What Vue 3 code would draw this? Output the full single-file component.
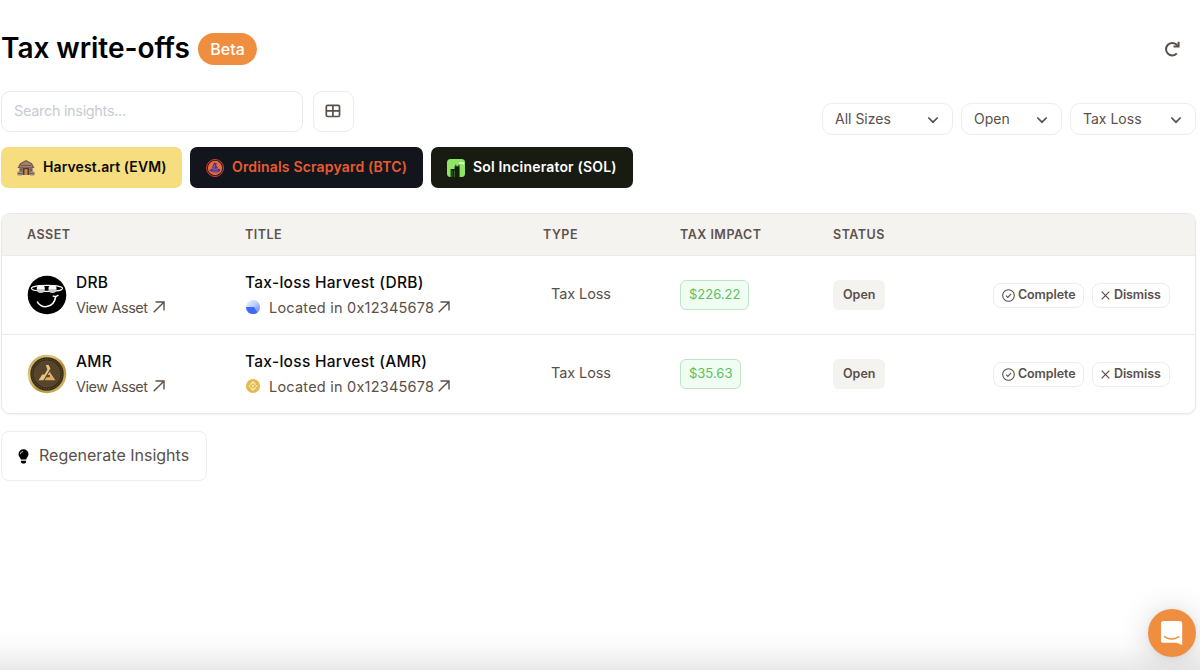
<script setup>
    import { ref } from 'vue'

    const search = ref('')

    const filters = [
        { label: 'All Sizes', name: 'sizes' },
        { label: 'Open', name: 'status' },
        { label: 'Tax Loss', name: 'type' },
    ]

    const columns = ['Asset', 'Title', 'Type', 'Tax Impact', 'Status', '']

    const insights = [
        { symbol: 'DRB', chain: 'base', wallet: '0x12345678', type: 'Tax Loss', impact: '$226.22', status: 'Open' },
        { symbol: 'AMR', chain: 'bnb', wallet: '0x12345678', type: 'Tax Loss', impact: '$35.63', status: 'Open' },
    ]
</script>

<template>
    <div class="page">
        <header class="page-header">
            <h1>Tax write-offs</h1>
            <span class="beta">Beta</span>
            <button class="refresh" aria-label="Refresh">
                <svg width="18" height="18" viewBox="0 0 18 18" fill="none" stroke="currentColor" stroke-width="2">
                    <path d="M13.8 13.4A6.2 6.2 0 1 1 13.4 4.6L15 6.2" />
                    <path d="M15.6 1.7V6.6H10.5" />
                </svg>
            </button>
        </header>

        <div class="toolbar">
            <input v-model="search" class="search" type="text" placeholder="Search insights...">
            <button class="view-toggle" aria-label="Table view">
                <svg width="16" height="14" viewBox="0 0 16 14" fill="none" stroke="currentColor" stroke-width="1.7">
                    <rect x="1.3" y="1.3" width="13.2" height="11.2" rx="1.4" />
                    <path d="M7.9 1.3V12.5M1.3 6.9H14.5" />
                </svg>
            </button>
            <div class="filters">
                <button v-for="filter in filters" :key="filter.name" class="filter" :class="filter.name">
                    <span>{{ filter.label }}</span>
                    <svg width="12" height="8" viewBox="0 0 12 8" fill="none" stroke="currentColor" stroke-width="1.7">
                        <path d="M1.3 1.5L6 6.2L10.7 1.5" />
                    </svg>
                </button>
            </div>
        </div>

        <div class="partners">
            <a class="partner harvest">
                <svg width="18" height="18" viewBox="0 0 18 18">
                    <path d="M2.3 8H15.7V16H2.3Z" fill="#8c7468" />
                    <path d="M9 1L15 4.2L17.5 9H.5L3 4.2Z" fill="#78594d" />
                    <path d="M9 2.2L13.8 5L15.6 8.2H2.4L4.2 5Z" fill="#a2806e" />
                    <path d="M6 9H12V16H6Z" fill="#57372e" />
                    <path d="M7.5 10.2H10.5V16H7.5Z" fill="#c68a4e" />
                    <path d="M4 9.5V16M14 9.5V16" stroke="#59463f" />
                    <path d="M.5 12.5H5V16.5H.5ZM13 12.5H17.5V16.5H13Z" fill="#a08a82" />
                    <path d="M.5 14.5H5M13 14.5H17.5M4 6.5H14" stroke="#67504a" stroke-width=".8" />
                </svg>
                <span>Harvest.art (EVM)</span>
            </a>
            <a class="partner ordinals">
                <svg width="18" height="18" viewBox="0 0 18 18">
                    <circle cx="9" cy="9" r="8.5" fill="#15161f" stroke="#c9472d" />
                    <circle cx="9" cy="9" r="7.2" fill="#f0673a" />
                    <path d="M8 3.2L11.2 4.8L10 5.8L12.3 9.8L14.6 10.4Q13.4 13.6 9 13.6Q4.6 13.4 3.4 11L5.8 9.8Z" fill="#4b3580" />
                    <path d="M8.2 4.8L9.4 8L7.2 9.2ZM5 11.2Q9 12.8 13 11Q11.6 12.9 9 12.9Q6.4 12.8 5 11.2Z" fill="#7e62b0" />
                    <path d="M6 9.8Q9 11 12.2 9.7" fill="none" stroke="#b78bc2" stroke-width=".7" />
                </svg>
                <span>Ordinals Scrapyard (BTC)</span>
            </a>
            <a class="partner incinerator">
                <svg width="18" height="18" viewBox="0 0 18 18">
                    <rect width="18" height="18" rx="3.5" fill="#8fe467" />
                    <path d="M3.6 18V10H7.6V7.3H12.6V18Z" fill="#12200e" />
                    <path d="M5 11.5V18M7.4 11.5V18" stroke="#5f9a45" stroke-width=".6" />
                    <path d="M8.8 5.7V7.3M11.9 5.7V7.3" stroke="#12200e" />
                    <path d="M11.8 4Q13.5 2.4 15.2 3.4L17 3.2V6Q15.8 4.8 14.6 5.2Q13.6 4.2 11.8 5Z" fill="#e4ffd8" />
                </svg>
                <span>Sol Incinerator (SOL)</span>
            </a>
        </div>

        <section class="table">
            <div class="row head">
                <span v-for="column in columns" :key="column">{{ column }}</span>
            </div>
            <div v-for="item in insights" :key="item.symbol" class="row">
                <div class="asset">
                    <svg v-if="item.symbol === 'DRB'" class="avatar" viewBox="0 0 40 40">
                        <circle cx="20" cy="20" r="19.3" fill="#000" />
                        <g fill="none" stroke="#fff">
                            <ellipse cx="20" cy="13.4" rx="15.5" ry="3" stroke-width="1.2" />
                            <path d="M10.2 26.4C13 33.8 26.5 34.5 28.8 21.5" stroke-width="1.5" />
                            <path d="M25.7 20.8Q28.8 22.4 31.4 20" stroke-width="1.5" />
                        </g>
                        <path d="M9.7 14A4.1 4.1 0 0 1 17.9 14ZM21.4 14A4.1 4.1 0 0 1 29.6 14Z" fill="#fff" />
                        <path d="M9.7 14A4.1 4.1 0 0 0 17.9 14ZM21.4 14A4.1 4.1 0 0 0 29.6 14Z" fill="#ccc" />
                    </svg>
                    <svg v-else class="avatar" viewBox="0 0 40 40">
                        <defs>
                            <linearGradient id="gold" x1="0" y1="0" x2="1" y2="1">
                                <stop offset="0" stop-color="#aa8a3e" />
                                <stop offset=".3" stop-color="#e1ca7e" />
                                <stop offset=".6" stop-color="#b58e38" />
                                <stop offset="1" stop-color="#e3c572" />
                            </linearGradient>
                            <radialGradient id="bronze">
                                <stop offset="0" stop-color="#665331" />
                                <stop offset="1" stop-color="#342a1a" />
                            </radialGradient>
                        </defs>
                        <circle cx="20" cy="20" r="19.3" fill="url(#gold)" />
                        <circle cx="20" cy="20" r="16.7" fill="url(#bronze)" />
                        <circle cx="20" cy="20" r="15" fill="none" stroke="#6f5c37" stroke-dasharray="1.2 1.4" />
                        <circle cx="20" cy="20" r="12.9" fill="#56452a" stroke="#685231" stroke-width=".6" />
                        <path d="M18.8 11H21.6L23.4 14.4L16.4 26.2H11.6L15.2 20.6H17.6L20.4 15.4Z" fill="#e8c184" />
                        <path d="M22.6 17.6L28.4 26.2H17.6L19.4 23.2H22.8V21H20.6Z" fill="#dcab66" />
                    </svg>
                    <div class="stack">
                        <strong>{{ item.symbol }}</strong>
                        <a class="link">
                            <span class="view">View Asset</span>
                            <svg class="arrow" viewBox="0 0 12 12"><path d="M.7 11.3L10.8 1.2M2.5 1H11V9.5" /></svg>
                        </a>
                    </div>
                </div>
                <div class="stack title">
                    <strong>Tax-loss Harvest ({{ item.symbol }})</strong>
                    <a class="link">
                        <svg v-if="item.chain === 'base'" class="chain" viewBox="0 0 14 14">
                            <defs>
                                <linearGradient id="sky" x1="0" y1="0" x2="1" y2="1">
                                    <stop offset="0" stop-color="#f4f7ff" />
                                    <stop offset=".5" stop-color="#b9ccfe" />
                                    <stop offset="1" stop-color="#5078fc" />
                                </linearGradient>
                            </defs>
                            <circle cx="7" cy="7" r="7" fill="url(#sky)" />
                            <path d="M0 7H8L11.5 12.4A7 7 0 0 1 0 7Z" fill="#3f6af8" />
                        </svg>
                        <svg v-else class="chain" viewBox="0 0 14 14">
                            <circle cx="7" cy="7" r="7" fill="#e5b94c" />
                            <g fill="none" stroke="#fff6dc" stroke-width="1.1">
                                <path d="M4.4 5.7L7 3.1L9.6 5.7M4.4 8.3L7 10.9L9.6 8.3" />
                            </g>
                            <path d="M7 5.7L8.3 7L7 8.3L5.7 7ZM3.4 6.1L4.3 7L3.4 7.9L2.5 7ZM10.6 6.1L11.5 7L10.6 7.9L9.7 7Z" fill="#fff6dc" />
                        </svg>
                        <span class="located">Located in {{ item.wallet }}</span>
                        <svg class="arrow" viewBox="0 0 12 12"><path d="M.7 11.3L10.8 1.2M2.5 1H11V9.5" /></svg>
                    </a>
                </div>
                <div class="type-cell">{{ item.type }}</div>
                <div><span class="impact">{{ item.impact }}</span></div>
                <div><span class="status-badge">{{ item.status }}</span></div>
                <div class="actions">
                    <button class="action complete">
                        <svg width="13" height="13" viewBox="0 0 13 13" fill="none" stroke="currentColor" stroke-width="1.1">
                            <circle cx="6.5" cy="6.5" r="5.8" />
                            <path d="M4 6.7L5.8 8.4L9.1 4.8" />
                        </svg>
                        <span>Complete</span>
                    </button>
                    <button class="action dismiss">
                        <svg width="9" height="9" viewBox="0 0 9 9" fill="none" stroke="currentColor" stroke-width="1.2">
                            <path d="M.7.7L8.3 8.3M8.3.7L.7 8.3" />
                        </svg>
                        <span>Dismiss</span>
                    </button>
                </div>
            </div>
        </section>

        <button class="regenerate">
            <svg width="11" height="15" viewBox="0 0 11 15">
                <path d="M5.5.3A5 5 0 0 0 .5 5.3C.5 7.8 2.6 8.4 2.8 10.6H8.2C8.4 8.4 10.5 7.8 10.5 5.3A5 5 0 0 0 5.5.3ZM3 11.8H8V13.5L6.8 14.6H4.2L3 13.5Z" />
                <path d="M2.3 5.2A3 3 0 0 1 5 2.5" fill="none" stroke="#fff" stroke-width=".8" />
            </svg>
            <span>Regenerate Insights</span>
        </button>

        <div class="shade" />
        <button class="chat" aria-label="Open chat">
            <svg width="24" height="26" viewBox="0 0 24 26">
                <path d="M3.6 1H19.6A2.6 2.6 0 0 1 22.2 3.6V25L16.5 22.8H3.6A2.6 2.6 0 0 1 1 20.2V3.6A2.6 2.6 0 0 1 3.6 1Z" fill="#fff" />
                <path d="M4.5 16.6Q11.6 21.4 18.7 16.6" fill="none" stroke="#ef8e3f" stroke-width="1.3" stroke-linecap="round" />
            </svg>
        </button>
    </div>
</template>

<style>
    body {
        background: #fff;
        overflow: hidden;
    }
</style>

<style scoped>
    .page {
        box-sizing: border-box;
        height: 670px;
        padding: 32px 4px 0 1px;
        font-family: Inter, "Liberation Sans", sans-serif;
        color: #5a504a;
        position: relative;
    }

    .page *,
    .page *::before {
        box-sizing: border-box;
    }

    button {
        font: inherit;
        color: inherit;
        background: #fff;
        border: 1px solid #ececec;
        padding: 0;
        display: flex;
        align-items: center;
    }

    svg {
        display: block;
        flex: none;
    }

    span,
    strong {
        white-space: nowrap;
    }

    .page-header {
        height: 33px;
        display: flex;
        align-items: center;
    }

    h1 {
        margin: 0;
        width: 197px;
        font-size: 28px;
        line-height: 33px;
        font-weight: 600;
        letter-spacing: -0.05px;
        color: #000;
        white-space: nowrap;
    }

    .beta {
        width: 59px;
        height: 32px;
        margin-top: 1px;
        padding-bottom: 1px;
        border-radius: 16px;
        background: #ef8e3f;
        color: #fff;
        font-size: 16px;
        font-weight: 500;
        display: flex;
        align-items: center;
        justify-content: center;
    }

    .refresh {
        border: 0;
        margin-left: auto;
        margin-right: 15px;
    }

    .toolbar {
        margin-top: 26px;
        height: 41px;
        display: flex;
        gap: 10px;
    }

    .search {
        width: 302px;
        height: 41px;
        border: 1px solid #e9e9ec;
        border-radius: 9px;
        padding: 0 12px 2px;
        font: 400 14.5px Inter, "Liberation Sans", sans-serif;
        letter-spacing: -0.33px;
    }

    .search::placeholder {
        color: #c8cbd2;
        opacity: 1;
    }

    .view-toggle {
        width: 41px;
        height: 41px;
        border-radius: 9px;
        padding: 0 1px 1px 0;
        justify-content: center;
    }

    .filters {
        margin: 12px 0 0 auto;
        display: flex;
        gap: 8px;
    }

    .filter {
        height: 32px;
        border-radius: 10px;
        padding: 0 13px 2px 12px;
        justify-content: space-between;
        font-size: 14px;
    }

    .filter svg {
        margin-top: 3px;
    }

    .sizes {
        width: 131px;
    }

    .status {
        width: 101px;
    }

    .type {
        width: 126px;
    }

    .partners {
        margin-top: 15px;
        display: flex;
        gap: 8px;
    }

    .partner {
        height: 41px;
        border-radius: 7px;
        padding: 0 16px;
        display: flex;
        align-items: center;
        gap: 8px;
        font-size: 14px;
        font-weight: 600;
        letter-spacing: 0.17px;
    }

    .partner span {
        margin-bottom: 2px;
    }

    .harvest {
        width: 181px;
        background: #f6de80;
        color: #0c0b06;
        letter-spacing: 0.08px;
    }

    .ordinals {
        width: 233px;
        background: #13151d;
        color: #e85c30;
    }

    .incinerator {
        width: 202px;
        background: #171b11;
        color: #fff;
    }

    .table {
        margin-top: 25px;
        height: 201px;
        border: 1px solid #e8e8e8;
        border-radius: 9px;
        overflow: hidden;
        box-shadow: 0 1px 2px rgba(0, 0, 0, 0.06);
    }

    .row {
        height: 79px;
        padding: 0 25px;
        display: grid;
        grid-template-columns: 218px 298px 137px 153px 1fr 177px;
        align-items: center;
    }

    .row + .row {
        border-top: 1px solid #ececec;
    }

    .head {
        height: 41px;
        background: #f4f3f0;
        font-size: 12.5px;
        font-weight: 600;
        letter-spacing: 0.5px;
        text-transform: uppercase;
        color: #5c524d;
    }

    .asset {
        display: flex;
        align-items: center;
        gap: 9px;
    }

    .avatar {
        width: 40px;
        height: 40px;
    }

    .stack {
        display: flex;
        flex-direction: column;
        gap: 5px;
        padding-bottom: 1px;
    }

    .stack strong {
        font-size: 15.5px;
        font-weight: 500;
        line-height: 20px;
        letter-spacing: 0.29px;
        color: #0b0a0a;
    }

    .link {
        height: 19px;
        display: flex;
        align-items: center;
        font-size: 14.5px;
    }

    .view {
        letter-spacing: -0.45px;
    }

    .located {
        letter-spacing: 0.22px;
    }

    .arrow {
        width: 12px;
        height: 12px;
        margin-left: 4px;
        fill: none;
        stroke: currentColor;
        stroke-width: 1.4;
    }

    .view + .arrow {
        margin-left: 5px;
    }

    .chain {
        width: 14px;
        height: 14px;
        margin-right: 9px;
        margin-left: 1px;
    }

    .type-cell {
        padding: 0 0 3px 8px;
        font-size: 14.5px;
        letter-spacing: -0.1px;
    }

    .impact,
    .status-badge {
        display: inline-flex;
        align-items: center;
        height: 30px;
        border-radius: 6px;
    }

    .impact {
        padding: 0 8px 2px;
        border: 1px solid #bfe3c8;
        background: #effdf2;
        color: #5dc05e;
        font-size: 13px;
    }

    .status-badge {
        padding: 0 10px 2px;
        background: #f4f3f0;
        font-size: 12.5px;
        font-weight: 600;
    }

    .actions {
        display: flex;
        gap: 8px;
    }

    .action {
        height: 25px;
        border-radius: 8px;
        padding: 0 8px;
        font-size: 12.5px;
        font-weight: 600;
        letter-spacing: -0.1px;
    }

    .action span {
        margin-bottom: 1px;
    }

    .complete {
        width: 91px;
        gap: 3px;
    }

    .dismiss {
        width: 78px;
        gap: 4px;
    }

    .regenerate {
        margin-top: 17px;
        width: 206px;
        height: 50px;
        border-radius: 8px;
        padding: 0 16px;
        gap: 10px;
        font-size: 16px;
    }

    .regenerate span {
        margin-bottom: 2px;
    }

    .shade {
        position: absolute;
        left: 0;
        right: 0;
        bottom: 0;
        height: 40px;
        background: linear-gradient(#fff, #fbfbfb 40%, #e9e9e9);
    }

    .chat {
        position: absolute;
        right: 4px;
        bottom: 13px;
        width: 48px;
        height: 48px;
        border: 0;
        border-radius: 50%;
        background: #ef8e3f;
        justify-content: center;
        box-shadow: 0 1px 6px rgba(0, 0, 0, 0.06), 0 2px 32px rgba(0, 0, 0, 0.16);
    }
</style>
